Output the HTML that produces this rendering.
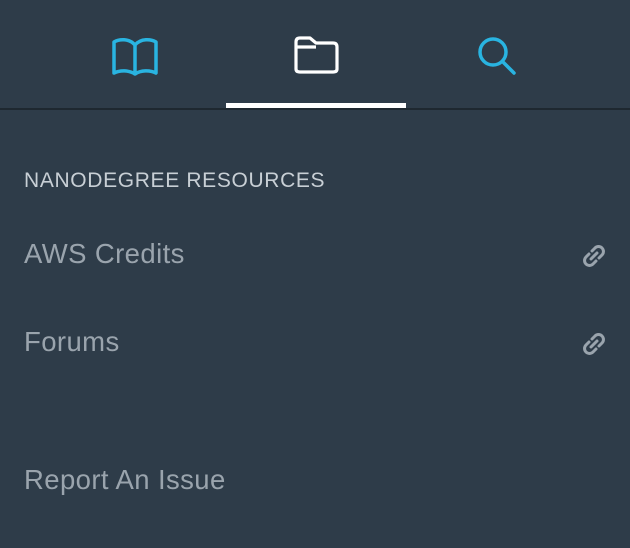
<!DOCTYPE html>
<html><head><style>
body{margin:0;width:630px;height:548px;background:#2e3c49;font-family:"Liberation Sans",sans-serif;overflow:hidden;position:relative}
.bar{position:absolute;left:0;top:108px;width:630px;height:2px;background:#1e2830}
.ul{position:absolute;left:226px;top:103px;width:180px;height:5px;background:#fff}
.t{position:absolute;left:24px;white-space:nowrap}
.h{top:169px;font-size:21px;color:#c8cfd5;letter-spacing:0.65px}
.i{font-size:27.5px;color:#9aa4ad;letter-spacing:0.4px}
svg{position:absolute}
</style></head><body>
<svg style="left:108px;top:33px" width="54" height="46" viewBox="0 0 54 46"><path d="M27 41 V12 C21 5 11 6 6 9 V40 C12 37 21 37 27 41 C33 37 42 37 48 40 V9 C43 6 33 5 27 12" fill="none" stroke="#29b4e1" stroke-width="3.5" stroke-linejoin="round" stroke-linecap="round"/></svg>
<svg style="left:292px;top:34px" width="48" height="42" viewBox="0 0 48 42"><path d="M4 8 Q4 4 8 4 H18 L24 9 H41 Q45 9 45 13 V35 Q45 38 41 38 H8 Q4 38 4 35 Z M4 13 H24" fill="none" stroke="#fff" stroke-width="3.2" stroke-linejoin="round"/></svg>
<svg style="left:474px;top:33px" width="48" height="46" viewBox="0 0 48 46"><circle cx="19" cy="19" r="13" fill="none" stroke="#29b4e1" stroke-width="3.5"/><path d="M29 29 L40 40" stroke="#29b4e1" stroke-width="3.5" stroke-linecap="round"/></svg>
<div class="ul"></div><div class="bar"></div>
<div class="t h">NANODEGREE RESOURCES</div>
<div class="t i" style="top:238px">AWS Credits</div>
<div class="t i" style="top:326px">Forums</div>
<div class="t i" style="top:464px">Report An Issue</div>
<svg style="left:581px;top:243px" width="26" height="26" viewBox="0 0 26 26"><g fill="none" stroke="#9aa4ad" stroke-width="3" stroke-linecap="round"><path d="M11 8 L14 5 A4.2 4.2 0 0 1 21 12 L18 15"/><path d="M15 18 L12 21 A4.2 4.2 0 0 1 5 14 L8 11"/><path d="M10 16 L16 10"/></g></svg>
<svg style="left:581px;top:331px" width="26" height="26" viewBox="0 0 26 26"><g fill="none" stroke="#9aa4ad" stroke-width="3" stroke-linecap="round"><path d="M11 8 L14 5 A4.2 4.2 0 0 1 21 12 L18 15"/><path d="M15 18 L12 21 A4.2 4.2 0 0 1 5 14 L8 11"/><path d="M10 16 L16 10"/></g></svg>
</body></html>
